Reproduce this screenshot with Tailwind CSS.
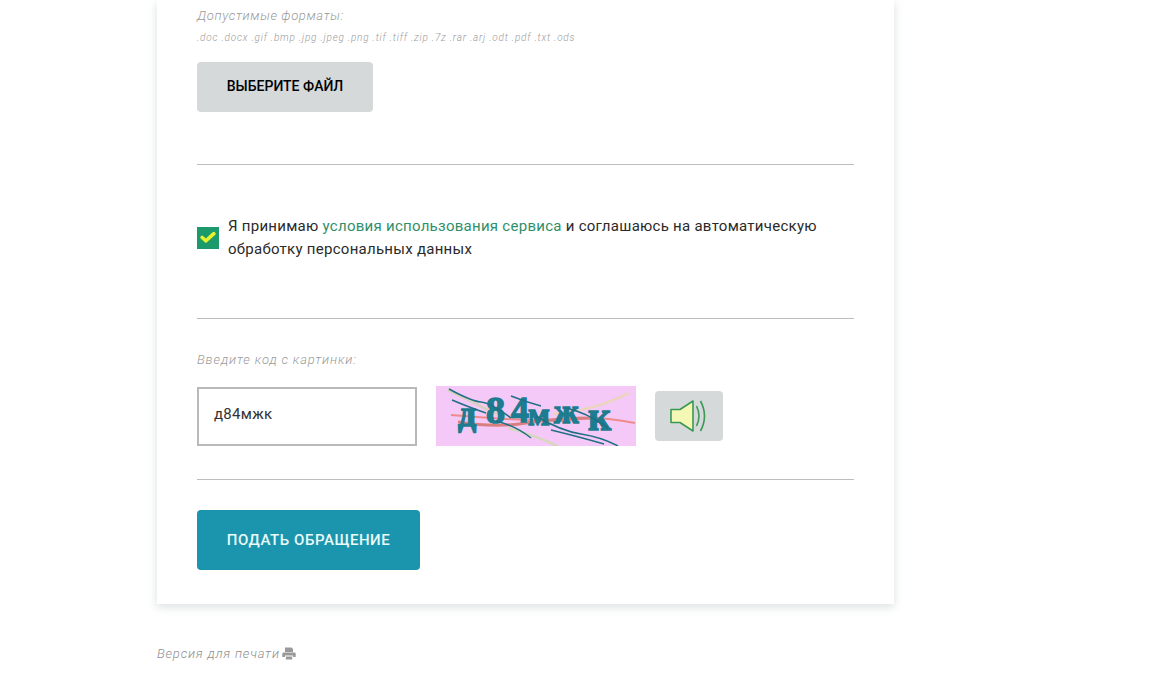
<!DOCTYPE html>
<html lang="ru">
<head>
<meta charset="utf-8">
<script src="https://cdn.jsdelivr.net/npm/@tailwindcss/browser@4"></script>
</head>
<body class="bg-white font-['Roboto',sans-serif] text-[#1c1c1c] h-[690px] overflow-hidden">
<div class="ml-[157px] w-[737px]">
  <main class="bg-white shadow-[0_3px_9px_rgba(90,120,120,0.22)] h-[604px] px-[40px] pt-[7px]">
    <p class="text-[13px] leading-[17px] italic font-light text-[#9a9a9a] tracking-[0.65px]">Допустимые форматы:</p>
    <p class="text-[10px] leading-[14px] mt-[7px] italic font-light text-[#9a9a9a] tracking-[0.78px]">.doc .docx .gif .bmp .jpg .jpeg .png .tif .tiff .zip .7z .rar .arj .odt .pdf .txt .ods</p>
    <button class="mt-[17px] block w-[176px] h-[50px] pb-[2px] bg-[#d5d9da] rounded-[4px] text-[14px] font-medium text-black">ВЫБЕРИТЕ ФАЙЛ</button>
    <hr class="mt-[52px] w-[657px] border-[#bdbdbd]">
    <div class="flex items-center gap-[9px] mt-[49px] h-[46px]">
      <span class="w-[22px] h-[22px] bg-[#1d9a6c] flex items-center justify-center shrink-0 mt-[1px]">
        <svg width="16" height="13" viewBox="0 0 16 13"><path d="M2.2 6.5 L6 9.8 L13.8 2.6" fill="none" stroke="#e6f22e" stroke-width="3.6" stroke-linecap="round" stroke-linejoin="round"/></svg>
      </span>
      <p class="text-[15px] leading-[23px] tracking-[0.27px] text-[#2a2a2a] pt-[2px]">Я принимаю <a class="text-[#2f8f6b]">условия использования сервиса</a> и соглашаюсь на автоматическую<br>обработку персональных данных</p>
    </div>
    <hr class="mt-[58px] w-[657px] border-[#bdbdbd]">
    <p class="mt-[32px] text-[13px] leading-[17px] italic font-light text-[#9a9a9a] tracking-[0.86px]">Введите код с картинки:</p>
    <div class="flex items-start mt-[18px] h-[60px]">
      <input value="д84мжк" class="mt-[1px] w-[220px] h-[59px] border-2 border-[#b9b9b9] bg-white pl-[15px] pb-[5px] text-[15px] text-[#333] tracking-[0.3px] outline-none font-['Roboto',sans-serif]">
      <svg class="ml-[19px] block" width="200" height="60" viewBox="0 0 200 60">
        <rect width="200" height="60" fill="#f5c9f7"/>
        <path d="M12 4 Q35 15 48 22 T70 30" stroke="#d8d0c0" stroke-width="3" fill="none"/>
        <path d="M118 28 Q160 24 193 7" stroke="#ead5b8" stroke-width="2.5" fill="none"/>
        <path d="M72 42 Q100 50 122 60" stroke="#d9d6c0" stroke-width="2.5" fill="none"/>
        <path d="M15 29 Q50 32 90 34 T145 33 T199 37" stroke="#ee8b8b" stroke-width="2" fill="none"/>
        <path d="M22 36 Q60 42 90 37 T160 32" stroke="#d97f80" stroke-width="3" fill="none"/>
        <g font-family="'Liberation Serif',serif" font-weight="700" fill="#1d7c90" stroke="#1d7c90" stroke-width="1.4">
          <text x="22" y="40" font-size="36">д</text>
          <text x="50" y="37" font-size="38">8</text>
          <text x="75" y="36" font-size="36">4</text>
          <text x="92" y="39" font-size="32">м</text>
          <text x="118" y="37" font-size="34">ж</text>
          <text x="152" y="44" font-size="40">к</text>
        </g>
        <path d="M13 3 Q35 15 45 16 T75 32 M16 14 Q35 22 50 27 M75 10 Q90 16 105 20 M60 35 Q80 40 95 52 M100 30 Q125 45 145 48 T182 60 M115 44 Q140 50 168 58 M130 22 Q150 26 172 42" stroke="#1f6f85" stroke-width="1.5" fill="none"/>
      </svg>
      <button class="ml-[19px] mt-[5px] w-[68px] h-[50px] bg-[#d5d9da] rounded-[4px] flex items-center justify-center" aria-label="Прослушать код">
        <svg width="40" height="34" viewBox="0 0 40 34">
          <path d="M2 10.5 H11 L24 2 V32 L11 23.5 H2 Z" fill="#f5f8b4" stroke="#3a9a55" stroke-width="1.6" stroke-linejoin="round"/>
          <path d="M27.5 7 Q32.5 17 27.5 27 M31.5 2 Q39.5 17 31.5 32" fill="none" stroke="#3a9a55" stroke-width="1.6"/>
        </svg>
      </button>
    </div>
    <hr class="mt-[33px] w-[657px] border-[#bdbdbd]">
    <button class="mt-[30px] block w-[223px] h-[60px] bg-[#1b95ad] rounded-[4px] text-[15px] font-medium text-[#e9fbfb] tracking-[0.55px]">ПОДАТЬ ОБРАЩЕНИЕ</button>
  </main>
  <p class="mt-[41px] flex items-center gap-[2px] text-[13px] leading-[17px] italic font-light text-[#8f8f8f] tracking-[0.8px]">Версия для печати
    <svg width="14" height="13" viewBox="0 0 14 13" fill="#999"><path d="M3 0.5 H9.5 L11 2 V5 H3 Z M1.5 5.5 H12.5 A1.2 1.2 0 0 1 13.7 6.7 V10 H11 V8.5 H3 V10 H0.3 V6.7 A1.2 1.2 0 0 1 1.5 5.5 Z M3.8 9.5 H10.2 V12.5 H3.8 Z"/></svg>
  </p>
</div>
</body>
</html>
